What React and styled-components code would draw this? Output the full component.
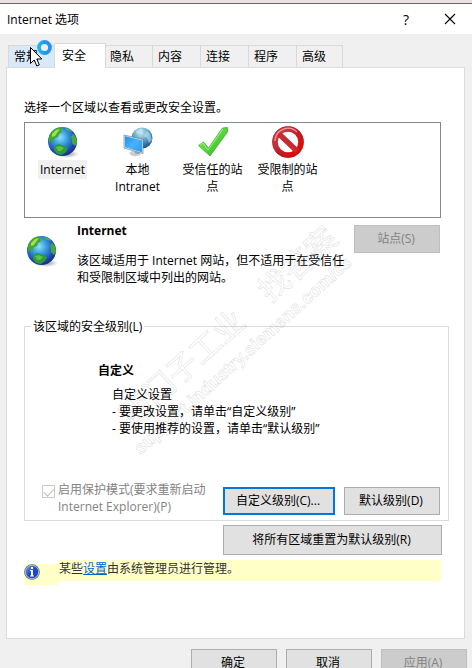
import React, { useState } from "react";
import styled, { createGlobalStyle } from "styled-components";

const TABS = ["常规", "安全", "隐私", "内容", "连接", "程序", "高级"];

export default function App() {
    const [tab, setTab] = useState(1);
    const [zone, setZone] = useState(0);

    const zones = [
        { name: "Internet", icon: <GlobeIcon id="zone" /> },
        { name: "本地 Intranet", icon: <IntranetIcon /> },
        { name: "受信任的站点", icon: <CheckIcon /> },
        { name: "受限制的站点", icon: <BlockedIcon /> },
    ];

    return (
        <Window>
            <GlobalStyle />
            <TitleBar>
                <Title>Internet 选项</Title>
                <TitleButton aria-label="帮助">?</TitleButton>
                <TitleButton aria-label="关闭">
                    <svg width="12" height="12" viewBox="0 0 12 12">
                        <path d="M1 1l10 10M11 1L1 11" stroke="#000" strokeWidth="1.1" />
                    </svg>
                </TitleButton>
            </TitleBar>

            <TabList role="tablist">
                {TABS.map((name, idx) => (
                    <Tab
                        key={name}
                        role="tab"
                        aria-selected={tab === idx}
                        $active={tab === idx}
                        $hot={idx === 0}
                        onClick={() => setTab(idx)}
                    >
                        {name}
                    </Tab>
                ))}
            </TabList>

            <Panel role="tabpanel">
                <Intro>选择一个区域以查看或更改安全设置。</Intro>
                <ZoneList>
                    {zones.map((z, idx) => (
                        <Zone key={z.name} onClick={() => setZone(idx)}>
                            {z.icon}
                            <ZoneName $selected={zone === idx}>{z.name}</ZoneName>
                        </Zone>
                    ))}
                </ZoneList>

                <ZoneInfo>
                    <ZoneInfoIcon><GlobeIcon id="info" /></ZoneInfoIcon>
                    <ZoneText>
                        <ZoneTitle>Internet</ZoneTitle>
                        <p>该区域适用于 Internet 网站，但不适用于在受信任和受限制区域中列出的网站。</p>
                    </ZoneText>
                    <Button disabled>站点(S)</Button>
                </ZoneInfo>

                <Group>
                    <Legend>该区域的安全级别(L)</Legend>
                    <Level>
                        <LevelName>自定义</LevelName>
                        <LevelDesc>
                            自定义设置<br />
                            - 要更改设置，请单击“自定义级别”<br />
                            - 要使用推荐的设置，请单击“默认级别”
                        </LevelDesc>
                    </Level>
                    <GroupFooter>
                        <Check type="checkbox" id="protect" defaultChecked disabled />
                        <CheckLabel htmlFor="protect">启用保护模式(要求重新启动 Internet Explorer)(P)</CheckLabel>
                        <Button $width={112} $primary>自定义级别(C)...</Button>
                        <Button $width={96}>默认级别(D)</Button>
                    </GroupFooter>
                </Group>

                <ResetRow>
                    <Button $width={219} $tall>将所有区域重置为默认级别(R)</Button>
                </ResetRow>

                <Notice>
                    <NoticeIcon><InfoIcon /></NoticeIcon>
                    <NoticeText>某些<a href="#settings">设置</a>由系统管理员进行管理。</NoticeText>
                </Notice>
            </Panel>

            <Footer>
                <Button>确定</Button>
                <Button>取消</Button>
                <Button disabled>应用(A)</Button>
            </Footer>

            <Watermark aria-hidden="true">
                <WatermarkTitle>西门子工业　找答案</WatermarkTitle>
                <WatermarkUrl>support.industry.siemens.com/cs</WatermarkUrl>
            </Watermark>
            <Pointer />
        </Window>
    );
}

// icons
const GlobeIcon = ({ id }) => (
    <svg width="32" height="32" viewBox="0 0 32 32">
        <defs>
            <radialGradient id={`sea-${id}`} cx="42%" cy="36%" r="62%">
                <stop offset="0" stopColor="#8fe0fa" />
                <stop offset="0.4" stopColor="#3a9fe0" />
                <stop offset="0.8" stopColor="#1f4fb8" />
                <stop offset="1" stopColor="#15358f" />
            </radialGradient>
            <radialGradient id={`shade-${id}`}>
                <stop offset="0" stopColor="#555" stopOpacity="0.6" />
                <stop offset="1" stopColor="#555" stopOpacity="0" />
            </radialGradient>
        </defs>
        <ellipse cx="20" cy="28" rx="12" ry="4" fill={`url(#shade-${id})`} />
        <circle cx="15.5" cy="15.5" r="14.5" fill={`url(#sea-${id})`} />
        <path d="M2 10C4 5 8 2 12 1.500l4 .5-2 2 1 2-3 2-1 3-3 1-2 4-2-1-2 2z" fill="#42a632" />
        <path d="M5 8l4-4 4-1-3 4-2 3-3 1z" fill="#a5df55" />
        <path d="M19 2c3 .5 5 2 6 4l-3-1-3-1z" fill="#4cae57" />
        <path d="M26 8c3 2 4 5 4 9l-2 3-3-3 0-4-1-2z" fill="#48a936" />
        <path d="M7 20l5-2 5 2 4 2-2 4-4 3-5-1-3-4z" fill="#2f9b37" />
        <path d="M9 21l4-1 4 2-3 3-3 0z" fill="#5bc04b" />
    </svg>
);

const IntranetIcon = () => (
    <svg width="32" height="32" viewBox="0 0 32 32">
        <defs>
            <radialGradient id="intra-globe" cx="45%" cy="25%" r="70%">
                <stop offset="0" stopColor="#c8eaf5" />
                <stop offset="0.5" stopColor="#63a9c9" />
                <stop offset="1" stopColor="#1f5c8e" />
            </radialGradient>
            <linearGradient id="intra-screen" x1="0" y1="0" x2="1" y2="1">
                <stop offset="0" stopColor="#1f8fe8" />
                <stop offset="0.5" stopColor="#4bb2fc" />
                <stop offset="1" stopColor="#2799f2" />
            </linearGradient>
        </defs>
        <circle cx="20" cy="12" r="10.500" fill="url(#intra-globe)" />
        <path d="M13 5l6-3 2 2-3 3-3 1zM25 5l3 3 2 6-3 3-2-5-3-2z" fill="#d5eaf0" opacity="0.5" />
        <path d="M7 27l5-3 6 2 1 3-6 1.500-4-1z" fill="#c9d0d5" />
        <path d="M13 22l4 1v5h-4z" fill="#9da8b0" />
        <path d="M2 9l19 4.500v14L2 22z" fill="#dde6ec" />
        <path d="M2 9l19 4.500v14L2 22z" fill="none" stroke="#5b7488" strokeWidth="0.6" />
        <path d="M3 10.300l17 4v11.900L3 21.200z" fill="url(#intra-screen)" />
    </svg>
);

const CheckIcon = () => (
    <svg width="32" height="32" viewBox="0 0 32 32">
        <defs>
            <linearGradient id="tick" x1="0" y1="0" x2="1" y2="1">
                <stop offset="0" stopColor="#96e875" />
                <stop offset="0.5" stopColor="#54d83b" />
                <stop offset="1" stopColor="#26a51c" />
            </linearGradient>
        </defs>
        <path
            d="M1.500 19.500l5-3.500 5 6L25.500 2l5-.5v4.500L13 30z"
            fill="url(#tick)"
            stroke="#43a936"
            strokeWidth="0.8"
            strokeLinejoin="round"
        />
        <path d="M3 19l3-2 5 7L26 3" fill="none" stroke="#b6f29c" strokeWidth="0.8" />
    </svg>
);

const BlockedIcon = () => (
    <svg width="32" height="32" viewBox="0 0 32 32">
        <defs>
            <linearGradient id="block" x1="0" y1="0" x2="1" y2="1">
                <stop offset="0" stopColor="#d6454c" />
                <stop offset="0.5" stopColor="#bd2029" />
                <stop offset="1" stopColor="#f00000" />
            </linearGradient>
        </defs>
        <circle cx="16" cy="16" r="13" fill="#fff" stroke="url(#block)" strokeWidth="5.500" />
        <path d="M7 8l18 17" stroke="#c52b31" strokeWidth="5.500" />
        <circle cx="16" cy="16" r="15.500" fill="none" stroke="#a51e24" strokeWidth="0.6" />
        <path d="M3 15A13 13 0 0 1 25 6" fill="none" stroke="#f09a9d" strokeWidth="1.200" />
    </svg>
);

const InfoIcon = () => (
    <svg width="16" height="16" viewBox="0 0 16 16">
        <defs>
            <linearGradient id="info-fill" x1="0" y1="0" x2="1" y2="1">
                <stop offset="0" stopColor="#739aeb" />
                <stop offset="0.5" stopColor="#1c49c6" />
                <stop offset="1" stopColor="#1743b4" />
            </linearGradient>
        </defs>
        <circle cx="8" cy="8" r="7.800" fill="#5f687c" />
        <circle cx="8" cy="8" r="7" fill="#c5cbd9" />
        <circle cx="8" cy="8" r="6.200" fill="url(#info-fill)" />
        <path d="M7 3h2v2H7zM6 6h3v5.500h1v1H6v-1h1V7H6z" fill="#fff" />
    </svg>
);

const Pointer = () => (
    <PointerSvg width="26" height="30" viewBox="0 0 26 30">
        <defs>
            <linearGradient id="busy" x1="0" y1="0" x2="1" y2="0">
                <stop offset="0" stopColor="#20b5f5" />
                <stop offset="0.6" stopColor="#2492f3" />
            </linearGradient>
        </defs>
        <circle cx="15.500" cy="8.500" r="5.500" fill="#f0f0f0" stroke="url(#busy)" strokeWidth="3.800" />
        <path
            d="M1.500 8.500v16l3.700-3.500 2.600 6 2.500-1.100-2.500-5.900h5z"
            fill="#fff"
            stroke="#000"
            strokeWidth="1"
        />
    </PointerSvg>
);

// styled
const GlobalStyle = createGlobalStyle`
* {
    box-sizing: border-box;
}
body {
    margin: 0;
    background: #f0f0f0;
    color: #000;
    font: 12px/17px "Open Sans", "Noto Sans CJK SC", sans-serif;
}
button {
    font: inherit;
    color: inherit;
}
p {
    margin: 0;
}
`;

const Window = styled.main`
position: relative;
height: 100vh;
overflow: hidden;
border-top: 3px solid #e4e4e4;
`;

const TitleBar = styled.header`
display: flex;
align-items: center;
height: 31px;
padding-left: 7px;
background: #fff;
border-top: 1px solid #1979ca;
`;

const Title = styled.h1`
flex: 1;
margin: 0;
font-size: 12px;
font-weight: normal;
`;

const TitleButton = styled.button`
display: flex;
align-items: center;
justify-content: center;
width: 44px;
height: 28px;
padding: 0;
border: 0;
background: none;
font-size: 14px;
`;

const TabList = styled.div`
display: flex;
align-items: flex-end;
padding: 9px 8px 0;
`;

const Tab = styled.button`
position: relative;
width: ${p => (p.$active ? 52 : 48)}px;
height: ${p => (p.$active ? 25 : 22)}px;
margin: ${p => (p.$active ? "0 -2px -1px" : "0")};
padding: 0 0 ${p => (p.$active ? 2 : 0)}px ${p => (p.$active ? 7 : 5)}px;
z-index: ${p => (p.$active ? 1 : 0)};
border: 1px solid #d9d9d9;
border-bottom: 0;
border-right-width: ${p => (p.$active ? 1 : 0)}px;
background: ${p => (p.$active ? "#fff" : p.$hot ? "#d8eaf9" : "#f0f0f0")};
text-align: left;
&:last-child {
    width: 47px;
    border-right-width: 1px;
}
`;

const Panel = styled.section`
height: 572px;
margin: 0 7px 0 6px;
padding: 31px 15px 0 17px;
border: 1px solid #dcdcdc;
background: #fff;
`;

const Intro = styled.p`
margin-bottom: 6px;
`;

const ZoneList = styled.div`
display: flex;
height: 96px;
margin-right: 8px;
border: 1px solid #828790;
`;

const Zone = styled.button`
display: flex;
flex-direction: column;
align-items: center;
width: 75px;
padding: 3px 5px 0;
border: 0;
background: none;
`;

const ZoneName = styled.span`
margin-top: 2px;
padding: 1px 2px;
background: ${p => (p.$selected ? "#f0f0f0" : "none")};
`;

const ZoneInfo = styled.div`
display: flex;
align-items: flex-start;
height: 100px;
margin-right: 9px;
padding-top: 7px;
`;

const ZoneInfoIcon = styled.div`
width: 53px;
padding: 10px 0 0 2px;
`;

const ZoneText = styled.div`
flex: 1;
margin-top: -3px;
padding-right: 6px;
`;

const ZoneTitle = styled.h2`
margin: 0 0 13px;
font-size: 12px;
font-weight: bold;
`;

const Button = styled.button`
flex: none;
width: ${p => p.$width || 86}px;
height: ${p => (p.$tall ? 30 : 28)}px;
padding: 0 2px 2px 0;
border: ${p => (p.$primary ? "2px solid #0078d7" : "1px solid #adadad")};
background: #e1e1e1;
&:disabled {
    border-color: #bfbfbf;
    background: #ccc;
    color: #838383;
}
`;

const Group = styled.fieldset`
display: flex;
flex-direction: column;
height: 203px;
margin: 0;
padding: 0 8px 5px 17px;
border: 1px solid #dcdcdc;
`;

const Legend = styled.legend`
margin-left: -11px;
padding: 0 2px;
`;

const Level = styled.div`
flex: 1;
padding: 27px 0 0 56px;
`;

const LevelName = styled.h3`
margin: 0 0 7px;
font-size: 12px;
font-weight: bold;
`;

const LevelDesc = styled.p`
padding-left: 14px;
`;

const GroupFooter = styled.div`
display: flex;
align-items: flex-end;
gap: 9px;
`;

const Check = styled.input`
appearance: none;
align-self: flex-start;
width: 13px;
height: 13px;
margin: 4px -6px 0 0;
border: 1px solid #ccc;
background: #fff;
&:checked::after {
    content: "";
    display: block;
    width: 9px;
    height: 5px;
    margin: 2px 1px;
    border: solid #bcbcbc;
    border-width: 0 0 1px 1px;
    transform: rotate(-45deg);
}
`;

const CheckLabel = styled.label`
flex: 1;
color: #838383;
`;

const ResetRow = styled.div`
display: flex;
justify-content: flex-end;
margin: 4px 7px 5px 0;
`;

const Notice = styled.div`
display: flex;
margin-right: 8px;
color: #333;
a {
    color: #0066cc;
}
`;

const NoticeIcon = styled.div`
display: flex;
align-items: center;
width: 35px;
height: 21px;
margin-top: 4px;
background: #ffffc8;
svg {
    margin-bottom: 5px;
}
`;

const NoticeText = styled.p`
flex: 1;
height: 21px;
background: #ffffc8;
`;

const Footer = styled.footer`
display: flex;
justify-content: flex-end;
gap: 9px;
padding: 10px 5px 10px 4px;
`;

const Watermark = styled.div`
position: absolute;
left: 144px;
top: 392px;
transform: rotate(-42deg);
transform-origin: 0 100%;
color: transparent;
-webkit-text-stroke: 1px rgba(0, 0, 0, 0.1);
white-space: nowrap;
pointer-events: none;
`;

const WatermarkTitle = styled.div`
padding-left: 12px;
font-size: 31px;
line-height: 42px;
`;

const WatermarkUrl = styled.div`
font: bold 18px/22px "Liberation Sans", sans-serif;
`;

const PointerSvg = styled.svg`
position: absolute;
left: 29px;
top: 36px;
z-index: 2;
pointer-events: none;
`;
